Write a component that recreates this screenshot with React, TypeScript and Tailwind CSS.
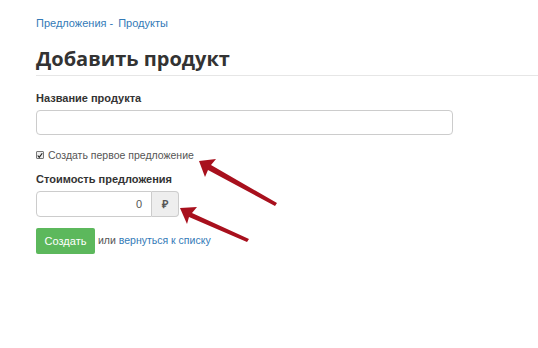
import React from "react";

export default function App() {
  return (
    <div className="relative w-[538px] h-[348px] bg-white overflow-hidden" style={{ fontFamily: '"Liberation Sans", Arial, sans-serif' }}>
      <div className="pt-[17px]">
        <div className="pl-[36px] text-[11px] leading-[13px] text-[#337ab7]">
          <span>Предложения</span>
          <span className="ml-[3px]">-</span>
          <span className="ml-[5px]">Продукты</span>
        </div>
        <h1 className="ml-[36px] mt-[17px] pb-[4px] border-b border-[#e6e6e6] text-[20px] leading-[24px] font-bold text-[#333]" style={{ fontFamily: '"Open Sans", sans-serif' }}>
          Добавить продукт
        </h1>
        <div className="pl-[36px] pr-[85px] pt-[16px]">
          <div className="text-[11px] leading-[13px] font-bold text-[#333]">Название продукта</div>
          <div className="mt-[5px] h-[25px] w-[417px] rounded-[4px] border border-[#ccc] bg-white" />
          <label className="mt-[13px] flex items-center gap-[4px] text-[10.5px] leading-[14px] text-[#555]">
            <span className="w-[8px] h-[8px] rounded-[1px] border border-[#777] bg-[#eee] flex items-center justify-center">
              <svg width="7" height="7" viewBox="0 0 8 8"><path d="M1 4 L3 6.5 L7 1" stroke="#222" strokeWidth="1.6" fill="none" /></svg>
            </span>
            Создать первое предложение
          </label>
          <div className="mt-[11px] text-[11px] leading-[13px] font-bold text-[#333]">Стоимость предложения</div>
          <div className="mt-[5px] flex w-[143px] h-[26px]">
            <div className="flex-1 rounded-l-[4px] border border-[#ccc] flex items-center justify-end pr-[9px] text-[11px] text-[#555]">0</div>
            <div className="w-[27px] rounded-r-[4px] border border-l-0 border-[#ccc] bg-[#eee] flex items-center justify-center text-[11px] font-bold text-[#555]">₽</div>
          </div>
          <div className="mt-[11px] flex items-center gap-[3px] text-[10.5px] text-[#555]">
            <button className="h-[26px] w-[59px] rounded-[2px] bg-[#5cb85c] text-white text-[11px]">Создать</button>
            <span>или <span className="text-[#337ab7]">вернуться к списку</span></span>
          </div>
        </div>
      </div>
      <svg className="absolute left-0 top-0" width="538" height="348" viewBox="0 0 538 348">
        <path d="M199 161 L216 159 L211 165 L277 203 L275 206 L208 170 L205 177 Z" fill="#a8101d" />
        <path d="M180 208 L197 207 L192 213 L249 239 L247 242 L189 217 L187 224 Z" fill="#a8101d" />
      </svg>
    </div>
  );
}
